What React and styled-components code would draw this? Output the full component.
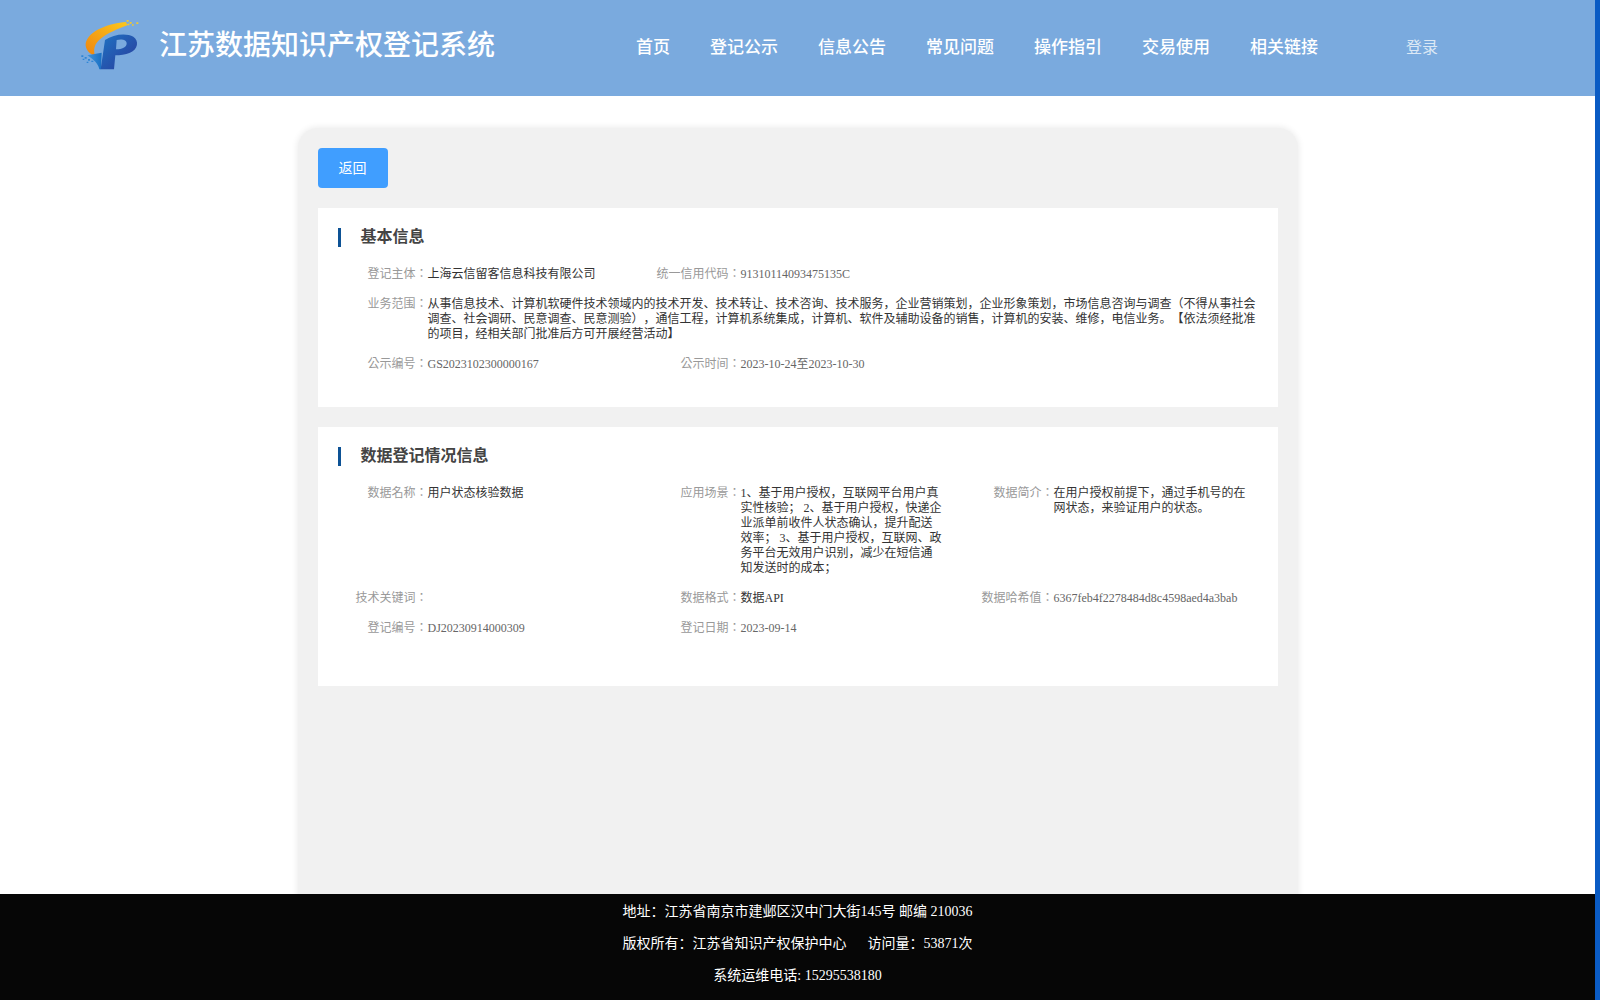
import React from "react";
import styled, { createGlobalStyle } from "styled-components";

const GlobalStyle = createGlobalStyle`
  html, body {
    margin: 0;
    padding: 0;
    height: 100%;
    overflow: hidden;
    background: #fff;
    font-family: "Liberation Serif", "Noto Sans CJK SC", serif;
    text-spacing-trim: space-all;
  }
  * {
    box-sizing: border-box;
  }
`;

const Page = styled.div`
  display: flex;
  height: 100vh;
`;

const Main = styled.div`
  flex: 1;
  min-width: 0;
  display: flex;
  flex-direction: column;
`;

const ScrollStrip = styled.div`
  width: 5px;
  background: #0a5bc4;
`;

const Header = styled.header`
  height: 96px;
  flex-shrink: 0;
  display: flex;
  align-items: center;
  padding-left: 70px;
  background: #7aaade;
  color: #fff;
`;

const Logo = styled.svg`
  width: 80px;
  height: 70px;
  align-self: flex-start;
  margin-top: 10px;
  margin-right: 9px;
`;

const SiteTitle = styled.h1`
  margin: -4px 0 0;
  font-size: 28px;
  line-height: 36px;
  font-weight: 500;
`;

const Nav = styled.nav`
  display: flex;
  gap: 40px;
  margin: -5px 0 0 141px;
`;

const NavItem = styled.a`
  font-size: 17px;
  font-weight: 500;
  color: #fff;
`;

const Login = styled.a`
  margin: -5px 0 0 88px;
  font-size: 16px;
  color: #dce8f5;
`;

const Content = styled.main`
  flex: 1;
  min-height: 0;
  overflow: hidden;
  padding: 32px 10px 0;
`;

const Card = styled.div`
  width: 1000px;
  min-height: 860px;
  margin: 0 auto;
  padding: 20px;
  background: #f1f1f1;
  border-radius: 20px;
  box-shadow: 0 0 6px 1px rgba(0, 0, 0, 0.08);
`;

const BackButton = styled.button`
  display: block;
  width: 70px;
  height: 40px;
  margin-bottom: 20px;
  padding: 0 0 2px;
  border: none;
  border-radius: 4px;
  background: #409eff;
  color: #fff;
  font-family: inherit;
  font-size: 14px;
`;

const Section = styled.section`
  padding: 20px 20px ${({ $bottom }) => $bottom}px;
  margin-bottom: 20px;
  background: #fff;
`;

const SectionTitle = styled.h2`
  margin: 0 0 20px;
  padding: 0 0 2px 20px;
  border-left: 3px solid #0d5295;
  font-size: 16px;
  line-height: 17px;
  font-weight: 700;
  color: #444;
`;

const Row = styled.div`
  display: flex;
  align-items: flex-start;
  margin-bottom: 15px;
  font-size: 12px;
  line-height: 15px;
`;

const Field = styled.div`
  display: flex;
  flex: ${({ $wide }) => ($wide ? "1" : "0 0 313px")};
`;

const Label = styled.span`
  flex: 0 0 90px;
  font-family: "Liberation Serif", "Noto Sans CJK TC", serif;
  text-align: right;
  white-space: nowrap;
  color: #999;
`;

const Value = styled.span`
  flex: ${({ $wide }) => ($wide ? "1" : "0 0 203px")};
  color: ${({ $muted }) => ($muted ? "#666" : "#333")};
`;

const Footer = styled.footer`
  height: 106px;
  flex-shrink: 0;
  padding-top: 2px;
  background: #060606;
  color: #fff;
  font-size: 14px;
  line-height: 32px;
  text-align: center;
`;

const navItems = ["首页", "登记公示", "信息公告", "常见问题", "操作指引", "交易使用", "相关链接"];

const basicRows = [
  [
    { label: "登记主体：", value: "上海云信留客信息科技有限公司" },
    { label: "统一信用代码：", value: "91310114093475135C", muted: true },
  ],
  [
    {
      label: "业务范围：",
      wide: true,
      value:
        "从事信息技术、计算机软硬件技术领域内的技术开发、技术转让、技术咨询、技术服务，企业营销策划，企业形象策划，市场信息咨询与调查（不得从事社会调查、社会调研、民意调查、民意测验），通信工程，计算机系统集成，计算机、软件及辅助设备的销售，计算机的安装、维修，电信业务。【依法须经批准的项目，经相关部门批准后方可开展经营活动】",
    },
  ],
  [
    { label: "公示编号：", value: "GS2023102300000167", muted: true },
    { label: "公示时间：", value: "2023-10-24至2023-10-30", muted: true },
  ],
];

const dataRows = [
  [
    { label: "数据名称：", value: "用户状态核验数据" },
    {
      label: "应用场景：",
      value:
        "1、基于用户授权，互联网平台用户真实性核验； 2、基于用户授权，快递企业派单前收件人状态确认，提升配送效率； 3、基于用户授权，互联网、政务平台无效用户识别，减少在短信通知发送时的成本；",
    },
    { label: "数据简介：", value: "在用户授权前提下，通过手机号的在网状态，来验证用户的状态。" },
  ],
  [
    { label: "技术关键词：", value: "" },
    { label: "数据格式：", value: "数据API" },
    { label: "数据哈希值：", value: "6367feb4f2278484d8c4598aed4a3bab", muted: true },
  ],
  [
    { label: "登记编号：", value: "DJ20230914000309", muted: true },
    { label: "登记日期：", value: "2023-09-14", muted: true },
  ],
];

const InfoRows = ({ rows }) =>
  rows.map((row, index) => (
    <Row key={index}>
      {row.map((field) => (
        <Field key={field.label} $wide={field.wide}>
          <Label>{field.label}</Label>
          <Value $wide={field.wide} $muted={field.muted}>
            {field.value}
          </Value>
        </Field>
      ))}
    </Row>
  ));

const SiteLogo = () => (
  <Logo viewBox="0 0 240 210">
    <defs>
      <linearGradient id="swoosh" x1="0" y1="1" x2="1" y2="0">
        <stop offset="0" stopColor="#ee8410" />
        <stop offset="1" stopColor="#fcc81c" />
      </linearGradient>
      <linearGradient id="letter" x1="0" y1="0" x2="1" y2="1">
        <stop offset="0" stopColor="#1f74c4" />
        <stop offset="1" stopColor="#2a3a9a" />
      </linearGradient>
      <linearGradient id="wing" x1="0" y1="0" x2="1" y2="0">
        <stop offset="0" stopColor="#3f94dc" />
        <stop offset="1" stopColor="#1a70c4" />
      </linearGradient>
    </defs>
    <path d="M168 36 C120 40 56 60 47 100 C45 120 60 132 76 140 C68 118 74 100 92 86 C112 70 140 58 172 46 Z" fill="url(#swoosh)" />
    <path d="M170 30h6v5h-6zM179 36h6v5h-6zM172 41h6v5h-6zM186 43h5v4h-5zM199 37h6v5h-6z" fill="#f4c92c" />
    <path d="M52 136 L95 128 L93 178 L88 178 C84 160 72 150 52 136 Z" fill="url(#wing)" />
    <path d="M34 136h6v5h-6zM44 141h6v5h-6zM54 147h6v5h-6zM64 152h6v4h-6zM38 146h5v4h-5zM50 155h5v4h-5z" fill="#2f86d6" />
    <path
      fillRule="evenodd"
      d="M105 90 C130 72 170 68 190 80 C208 92 204 118 180 128 C166 134 150 136 136 136 L132 178 L92 178 Z M140 90 L138 118 C156 118 170 112 170 100 C170 90 156 86 140 90 Z"
      fill="url(#letter)"
    />
  </Logo>
);

const App = () => {
  return (
    <Page>
      <GlobalStyle />
      <Main>
        <Header>
          <SiteLogo />
          <SiteTitle>江苏数据知识产权登记系统</SiteTitle>
          <Nav>
            {navItems.map((item) => (
              <NavItem key={item}>{item}</NavItem>
            ))}
          </Nav>
          <Login>登录</Login>
        </Header>
        <Content>
          <Card>
            <BackButton>返回</BackButton>
            <Section $bottom={20}>
              <SectionTitle>基本信息</SectionTitle>
              <InfoRows rows={basicRows} />
            </Section>
            <Section $bottom={35}>
              <SectionTitle>数据登记情况信息</SectionTitle>
              <InfoRows rows={dataRows} />
            </Section>
          </Card>
        </Content>
        <Footer>
          <div>地址：江苏省南京市建邺区汉中门大街145号 邮编 210036</div>
          <div>版权所有：江苏省知识产权保护中心&nbsp;&nbsp;&nbsp;&nbsp;&nbsp;&nbsp;访问量：53871次</div>
          <div>系统运维电话: 15295538180</div>
        </Footer>
      </Main>
      <ScrollStrip />
    </Page>
  );
};

export default App;
